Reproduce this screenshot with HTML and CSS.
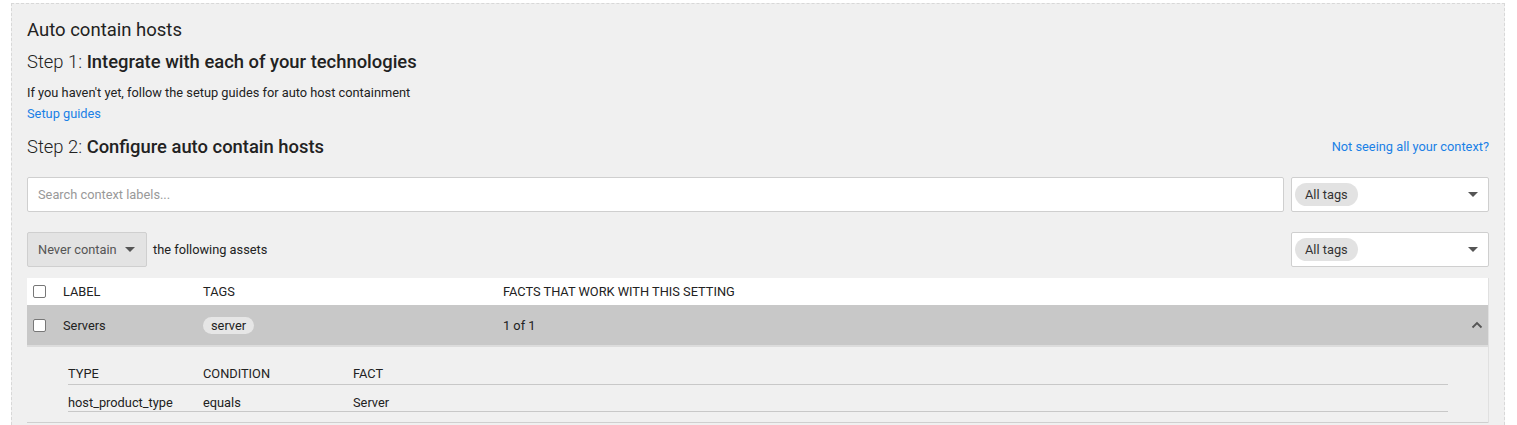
FILE: index.html
```html
<!DOCTYPE html>
<html lang="en">
<head>
    <meta charset="UTF-8">
    <title>Auto contain hosts</title>
    <link rel="stylesheet" href="styles.css">
</head>
<body>
    <div class="panel">
        <h2 class="title">Auto contain hosts</h2>

        <h3 class="step"><span class="step-num">Step 1:</span> Integrate with each of your technologies</h3>
        <p class="intro">If you haven't yet, follow the setup guides for auto host containment</p>
        <a class="link" href="#">Setup guides</a>

        <div class="step-row">
            <h3 class="step"><span class="step-num">Step 2:</span> Configure auto contain hosts</h3>
            <a class="link small" href="#">Not seeing all your context?</a>
        </div>

        <div class="filter-row">
            <input class="search" type="text" placeholder="Search context labels...">
            <div class="tag-select">
                <span class="chip">All tags</span>
                <span class="caret"></span>
            </div>
        </div>

        <div class="filter-row mode-row">
            <div class="mode">
                <button class="mode-btn">Never contain <span class="caret"></span></button>
                <span class="mode-text">the following assets</span>
            </div>
            <div class="tag-select">
                <span class="chip">All tags</span>
                <span class="caret"></span>
            </div>
        </div>

        <div class="table">
            <div class="tr thead">
                <div class="cell"><span class="checkbox"></span></div>
                <div class="cell">LABEL</div>
                <div class="cell">TAGS</div>
                <div class="cell">FACTS THAT WORK WITH THIS SETTING</div>
                <div class="cell"></div>
            </div>
            <div class="tr row open">
                <div class="cell"><span class="checkbox"></span></div>
                <div class="cell">Servers</div>
                <div class="cell"><span class="tag">server</span></div>
                <div class="cell">1 of 1</div>
                <div class="cell toggle">
                    <svg width="12" height="8" viewBox="0 0 12 8"><path d="M1.5 6.5 L6 2 L10.5 6.5" fill="none" stroke="#555" stroke-width="1.8"/></svg>
                </div>
            </div>
            <div class="details">
                <div class="dt dt-head">
                    <div>TYPE</div>
                    <div>CONDITION</div>
                    <div>FACT</div>
                </div>
                <div class="dt">
                    <div>host_product_type</div>
                    <div>equals</div>
                    <div>Server</div>
                </div>
            </div>
        </div>
    </div>
</body>
</html>
```

FILE: styles.css
```css
body {
    margin: 0;
    font-family: Roboto, "Liberation Sans", sans-serif;
    color: #222;
    background-color: white;
}
.panel {
    margin: 3px 12px 0 11px;
    padding: 14px 15px 2px 15px;
    background-color: #f0f0f0;
    border: 1px dashed #d8d8d8;
    border-bottom: none;
}
.title {
    margin: 0;
    font-size: 18.5px;
    font-weight: 400;
    line-height: 24px;
}
.step {
    margin: 8px 0 0 0;
    font-size: 18.4px;
    font-weight: 500;
    line-height: 24px;
}
.step-num {
    font-weight: 300;
}
.intro {
    margin: 9px 0 0 0;
    font-size: 12.8px;
    line-height: 20px;
}
.link {
    display: block;
    margin-top: 1px;
    font-size: 12.8px;
    line-height: 20px;
    color: #1a80e6;
    text-decoration: none;
}
.step-row {
    display: flex;
    justify-content: space-between;
    align-items: center;
    margin-top: 11px;
}
.step-row .step {
    margin: 0;
}
.step-row .link {
    margin-top: 0;
}
.filter-row {
    display: flex;
    gap: 7px;
    margin-top: 18px;
}
.mode-row {
    justify-content: space-between;
    margin-top: 20px;
}
.search {
    flex: 1;
    height: 35px;
    box-sizing: border-box;
    padding: 0 10px;
    border: 1px solid #cfcfcf;
    border-radius: 2px;
    background-color: white;
    font-family: inherit;
    font-size: 12.8px;
    color: #222;
    outline: none;
}
.search::placeholder {
    color: #999;
}
.tag-select {
    width: 198px;
    height: 35px;
    box-sizing: border-box;
    display: flex;
    align-items: center;
    justify-content: space-between;
    padding: 0 10px 0 3px;
    border: 1px solid #cfcfcf;
    border-radius: 2px;
    background-color: white;
}
.chip {
    display: inline-block;
    height: 23px;
    line-height: 23px;
    padding: 0 10px;
    border-radius: 12px;
    background-color: #e2e2e2;
    font-size: 12.8px;
    color: #333;
}
.caret {
    display: inline-block;
    width: 0;
    height: 0;
    border-left: 5px solid transparent;
    border-right: 5px solid transparent;
    border-top: 5px solid #555;
}
.mode {
    display: flex;
    align-items: center;
    gap: 6px;
}
.mode-btn {
    height: 35px;
    width: 120px;
    display: flex;
    align-items: center;
    gap: 8px;
    padding: 0 10px;
    border: 1px solid #cfcfcf;
    border-radius: 2px;
    background-color: #e3e3e3;
    font-family: inherit;
    font-size: 12.8px;
    color: #555;
}
.mode-text {
    font-size: 12.8px;
}
.table {
    margin-top: 11px;
    border-right: 1px solid #e0e0e0;
    font-size: 12.8px;
}
.tr {
    display: grid;
    grid-template-columns: 36px 140px 300px 1fr 40px;
    align-items: center;
}
.thead {
    height: 27px;
    background-color: white;
}
.row {
    height: 40px;
    background-color: #c8c8c8;
    border-bottom: 2px solid #dcdcdc;
}
.cell:first-child {
    padding-left: 6px;
}
.checkbox {
    display: block;
    width: 11px;
    height: 11px;
    border: 1px solid #777;
    border-radius: 2px;
    background-color: white;
}
.tag {
    display: inline-block;
    height: 17px;
    line-height: 17px;
    padding: 0 8px;
    border-radius: 9px;
    background-color: #e6e6e6;
}
.toggle {
    display: flex;
    justify-content: flex-end;
    padding-right: 5px;
}
.details {
    padding: 17px 40px 10px 41px;
    border-bottom: 1px solid #cfcfcf;
}
.dt {
    display: grid;
    grid-template-columns: 135px 150px 1fr;
    padding-top: 10px;
    line-height: 16px;
    border-bottom: 1px solid #c8c8c8;
}
.dt-head {
    padding-top: 0;
    line-height: 20px;
}
```
